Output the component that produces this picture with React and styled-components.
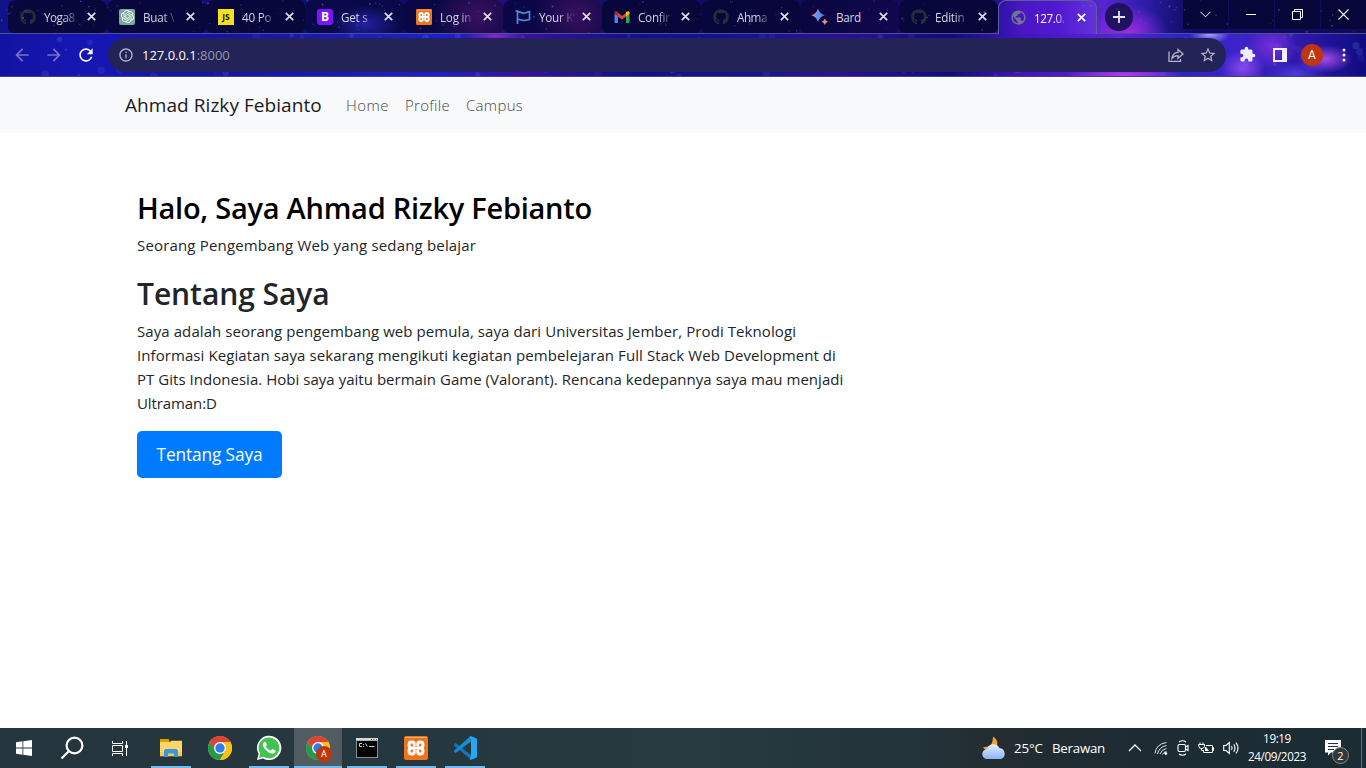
import React from "react";
import styled, { createGlobalStyle } from "styled-components";
import { FaGithub } from "react-icons/fa";
import { SiOpenai } from "react-icons/si";
import { MdExtension, MdPublic, MdRefresh, MdStarBorder, MdInfoOutline, MdArrowBack, MdArrowForward } from "react-icons/md";

const Global = createGlobalStyle`
  * { box-sizing: border-box; }
  html, body { margin: 0; padding: 0; }
  body { background: #fff; font-family: "Open Sans", "Noto Sans", sans-serif; overflow: hidden; }
  svg { display: block; flex: none; }
`;

const Screen = styled.div`
  width: 1366px;
  height: 768px;
  display: flex;
  flex-direction: column;
  overflow: hidden;
`;

/* ---------- browser chrome ---------- */
const TabStrip = styled.div`
  height: 34px;
  display: flex;
  align-items: stretch;
  padding-left: 8px;
  position: relative;
  border-bottom: 1px solid #4f4f96;
  background:
    radial-gradient(ellipse 40px 30px at 1128px 34px, #a02ce8 0%, transparent 100%),
    linear-gradient(90deg, #11118a 0, #0d0d6a 400px, #2a1080 540px, #0d0d62 640px, #150b62 960px, #4a14c0 1060px, #5626d0 1104px, #2c1ca8 1145px, #0f0d62 1190px, #120a55 1366px);
`;

const tabShades = {
  navy: "linear-gradient(90deg, #08083f, #07073a)",
  blue: "radial-gradient(ellipse 34px 18px at 60px 24px, #2222a0, transparent), #09094a",
  plum: "radial-gradient(ellipse 44px 40px at 75% 45%, #39105f, transparent), #0b0746",
  dark: "linear-gradient(90deg, #07073d, #080539)",
  violet: "linear-gradient(90deg, #0a063f, #10074d)",
};

const TabBox = styled.div`
  width: 99px;
  height: 33px;
  display: flex;
  align-items: center;
  padding-left: 12px;
  position: relative;
  border-radius: 8px 8px 6px 6px;
  background: ${(p) => tabShades[p.$shade]};
  &::after {
    content: "";
    position: absolute;
    right: -1px;
    top: 7px;
    width: 1px;
    height: 20px;
    background: #585897;
    display: ${(p) => (p.$last ? "none" : "block")};
  }
`;

const ActiveTab = styled(TabBox)`
  height: 34px;
  width: 99px;
  padding-left: 11px;
  border: 1px solid #5d5d99;
  border-bottom: 0;
  border-radius: 8px 8px 0 0;
  background: linear-gradient(90deg, #2e12a8, #4b16c6 25%, #5118d0 60%, #6432dc);
`;

const Favicon = styled.span`
  width: 16px;
  height: 16px;
  display: flex;
  align-items: center;
  justify-content: center;
  border-radius: ${(p) => p.$radius || 0}px;
  background: ${(p) => p.$bg || "none"};
  color: ${(p) => p.$color || "#fff"};
  font-weight: 700;
  font-size: ${(p) => p.$size || 9}px;
`;

const TabTitle = styled.span`
  width: 36px;
  margin-left: 8px;
  overflow: hidden;
  white-space: nowrap;
  font-size: 11.7px;
  line-height: 18px;
  letter-spacing: ${(p) => p.$ls || -0.25}px;
  color: ${(p) => (p.$active ? "#fff" : "#d3d3e2")};
  mask-image: ${(p) => (p.$full ? "none" : "linear-gradient(90deg, #000 20px, transparent 35px)")};
`;

const CloseSlot = styled.span`
  margin-left: 7px;
`;

const NewTab = styled.span`
  width: 28px;
  height: 28px;
  margin: 3px 0 0 8px;
  border-radius: 50%;
  background: #20125f;
  display: flex;
  align-items: center;
  justify-content: center;
`;

const WindowControls = styled.div`
  margin-left: auto;
  display: flex;
  gap: 1px;
  height: 29px;
`;

const WindowButton = styled.span`
  width: 45px;
  height: 29px;
  padding-right: 1px;
  display: flex;
  align-items: center;
  justify-content: center;
  background: #070638;
`;

const Sky = styled.svg`
  position: absolute;
  left: 0;
  top: 0;
  pointer-events: none;
`;

const Toolbar = styled.div`
  height: 43px;
  display: flex;
  align-items: center;
  padding: 0 0 1px 14px;
  position: relative;
  border-bottom: 1px solid #44427c;
  background:
    radial-gradient(ellipse 28px 14px at 1325px 25px, #a34bea, transparent),
    radial-gradient(ellipse 22px 18px at 1243px 34px, #8848ef, transparent),
    radial-gradient(ellipse 26px 24px at 1272px 12px, #7430d8, transparent),
    radial-gradient(ellipse 30px 12px at 1296px 40px, #4a3be0, transparent),
    radial-gradient(ellipse 60px 10px at 1125px 42px, #bb3df0, transparent),
    radial-gradient(ellipse 30px 10px at 495px 2px, #7c2bc8, transparent),
    radial-gradient(ellipse 20px 10px at 1210px 0, #a8a0ff, transparent),
    linear-gradient(90deg, #1313a2 0, #1616b4 90px, #1414a4 220px, #1d20c8 440px, #3a10a0 520px, #10108c 640px, #171292 760px, #2e1098 830px, #100c7c 950px, #4413bc 1020px, #5e22d8 1120px, #2a22c8 1180px, #3d23c8 1240px, #2a16a4 1310px, #0e0c80 1366px);
`;

const NavIcon = styled.span`
  width: 16px;
  height: 20px;
  margin-right: 16px;
  display: flex;
  align-items: center;
  justify-content: center;
  color: ${(p) => (p.$dim ? "#7672cd" : "#f5f5fb")};
`;

const Omnibox = styled.div`
  width: 1118px;
  height: 34px;
  margin-left: -2px;
  border-radius: 17px;
  background: #232357;
  display: flex;
  align-items: center;
  padding: 0 9px 0 10px;
  position: relative;
  z-index: 1;
  color: #b4b4c4;
`;

const Url = styled.span`
  margin-left: 8px;
  font-size: 13px;
  letter-spacing: -0.02px;
  color: #fff;
  em { font-style: normal; color: #9696ae; }
`;

const OmniboxActions = styled.span`
  margin-left: auto;
  display: flex;
  align-items: center;
  gap: 15px;
`;

const ToolbarActions = styled.div`
  display: flex;
  align-items: center;
  margin-left: 13px;
  position: relative;
  z-index: 1;
  color: #eef;
`;

const PanelIcon = styled.svg`
  margin-left: 17px;
`;

const Avatar = styled.span`
  width: 22px;
  height: 22px;
  margin: 0 12px 0 14px;
  border-radius: 50%;
  background: #bf360c;
  color: #fff;
  font: 12px/22px Roboto, sans-serif;
  text-align: center;
`;

/* ---------- web page ---------- */
const Navbar = styled.nav`
  height: 56px;
  background: #f8f9fa;
  display: flex;
  align-items: center;
  padding: 0 0 0 125px;
`;

const Brand = styled.span`
  width: 205px;
  white-space: nowrap;
  font-size: 19px;
  letter-spacing: 0.06px;
  color: #1a1a1a;
`;

const NavLinks = styled.div`
  display: flex;
  gap: 16px;
  margin-left: 16px;
`;

const NavLink = styled.span`
  width: ${(p) => p.$w}px;
  white-space: nowrap;
  font-size: 15px;
  font-weight: 300;
  letter-spacing: ${(p) => p.$ls || 0}px;
  color: #484848;
`;

const Main = styled.main`
  flex: 1;
  padding: 56px 0 0 137px;
  display: flex;
  flex-direction: column;
  align-items: flex-start;
  background: #fff;
`;

const Heading = styled.h1`
  margin: ${(p) => p.$margin};
  font-size: ${(p) => p.$size}px;
  font-weight: 600;
  line-height: 38px;
  letter-spacing: ${(p) => p.$ls}px;
  color: ${(p) => p.$color};
  white-space: nowrap;
`;

const Paragraph = styled.p`
  margin: 0;
  font-size: 15px;
  line-height: 24px;
  color: #212529;
`;

const Line = styled.span`
  display: block;
  white-space: nowrap;
  letter-spacing: ${(p) => p.$ls || 0}px;
`;

const PrimaryButton = styled.button`
  width: 145px;
  height: 47px;
  margin: 16px 0 0;
  padding: 0;
  border: 0;
  border-radius: 5px;
  background: #007bff;
  color: #fff;
  font: 17.3px/47px "Open Sans", sans-serif;
  letter-spacing: -0.12px;
`;

/* ---------- taskbar ---------- */
const Taskbar = styled.footer`
  height: 40px;
  display: flex;
  background: linear-gradient(90deg, #25353d 0, #26383f 450px, #273b40 700px, #22333a 920px, #232c31 1000px, #1d2c33 1130px, #1c2c34 1366px);
`;

const TaskButton = styled.span`
  width: 48px;
  height: 40px;
  margin-left: ${(p) => p.$gap || 0}px;
  display: flex;
  flex-direction: column;
  background: ${(p) => (p.$active ? "#505c62" : "none")};
  &::after {
    content: "";
    height: 2px;
    margin: 0 ${(p) => (p.$active ? 0 : 4)}px;
    background: ${(p) => (p.$open ? "#76b9ed" : "transparent")};
  }
`;

const TaskIcon = styled.span`
  height: 38px;
  padding: 2px 0 0 0;
  display: flex;
  align-items: center;
  justify-content: center;
  position: relative;
`;

const ProfileBadge = styled.span`
  position: absolute;
  left: 22px;
  top: 18px;
  width: 16px;
  height: 16px;
  border-radius: 50%;
  background: #bf360c;
  color: #fff;
  font: 9px/16px Roboto, sans-serif;
  text-align: center;
`;

const Tray = styled.div`
  margin-left: auto;
  width: 385px;
  display: flex;
  align-items: center;
  color: #fff;
`;

const Weather = styled.span`
  width: 143px;
  display: flex;
  align-items: center;
  font-size: 13.3px;
  white-space: nowrap;
  svg { margin: 0 -1px 0 1px; }
`;

const Temperature = styled.span`
  width: 38px;
  margin-left: 8px;
  letter-spacing: -0.1px;
`;

const Condition = styled.span`
  letter-spacing: -0.25px;
`;

const TrayIcons = styled.span`
  display: flex;
  align-items: center;
  gap: 8px;
`;

const Clock = styled.span`
  width: 72px;
  margin: -2px 0 0 0;
  display: flex;
  flex-direction: column;
  text-align: center;
  font-size: 11.7px;
  line-height: 18px;
  letter-spacing: -0.4px;
`;

const Notifications = styled.span`
  width: 26px;
  height: 28px;
  margin: 9px 0 0 12px;
  position: relative;
`;

const Count = styled.span`
  position: absolute;
  left: 7px;
  top: 8px;
  width: 17px;
  height: 17px;
  border: 1px solid #87898b;
  border-radius: 50%;
  background: #343638;
  font-size: 11px;
  line-height: 15px;
  text-align: center;
`;

const ShowDesktop = styled.span`
  width: 5px;
  height: 40px;
  margin-left: auto;
  border-left: 1px solid #64727a;
`;

/* ---------- drawings ---------- */
const Cross = ({ color = "#dedeea" }) => (
  <svg width="9" height="9" viewBox="0 0 9 9" stroke={color} strokeWidth="1.7">
    <path d="M.8 .8l7.4 7.4M8.2 .8L.8 8.2" />
  </svg>
);

const Stars = ({ height, seed, count, large }) => {
  const dots = [];
  let s = seed;
  const next = () => {
    s = (s * 16807) % 2147483647;
    return s / 2147483647;
  };
  for (let i = 0; i < count; i++) {
    dots.push(
      <circle key={i} cx={next() * 1366} cy={next() * height} r={(large ? 1.5 : 0.4) + next() * (large ? 2.5 : 0.6)}
        fill={next() > 0.5 ? "#6f86f0" : "#8e62dc"} opacity={(large ? 0.08 : 0.2) + next() * (large ? 0.16 : 0.35)} />
    );
  }
  return dots;
};

const Flag = () => (
  <svg width="16" height="16" viewBox="0 0 16 16" fill="none" stroke="#4d8ee0" strokeWidth="1.7">
    <path d="M.5 2h3M2.500 1.500V15M2.500 3c3-1 4 1.300 6.300 1.300S12 3 14.500 2.700V10.500c-2.500.400-3.300 1-5.500 1S6 9.800 2.500 10.700" />
  </svg>
);

const Gmail = () => (
  <svg width="16" height="16" viewBox="0 0 16 16">
    <path fill="#4285f4" d="M1 14h3V7L.500 4.500V13q0 1 .5 1z" />
    <path fill="#34a853" d="M12 14h2.500q1 0 1-1V4.500L12 7z" />
    <path fill="#ea4335" d="M3.500 3.500L8 6.900l4.500-3.400V7.200L8 10.600 3.500 7.200z" />
    <path fill="#c5221f" d="M.500 4c0-2 1.700-2.300 3.500-.9v4.300L.500 5z" />
    <path fill="#fbbc04" d="M15.500 4c0-2-1.700-2.300-3.500-.9v4.300L15.500 5z" />
  </svg>
);

const Bard = () => (
  <svg width="18" height="18" viewBox="0 0 18 18">
    <defs>
      <linearGradient id="bard"><stop offset="0" stopColor="#f0837c" /><stop offset=".35" stopColor="#9b83d8" /><stop offset=".6" stopColor="#3f9ce8" /><stop offset="1" stopColor="#3c7de0" /></linearGradient>
    </defs>
    <path fill="url(#bard)" d="M7 .500Q8.500 5.500 13.700 7.200 8.500 9 7 14 5.500 9 .300 7.200 5.500 5.500 7 .500z" />
    <path fill="#e88989" d="M13.800 10.500q.8 2.400 3.200 3.200-2.400.8-3.200 3.200-.8-2.400-3.200-3.200 2.400-.8 3.200-3.200z" />
  </svg>
);

const Chrome = () => (
  <svg width="24" height="24" viewBox="0 0 24 24">
    <circle cx="12" cy="12" r="12" fill="#fbc116" />
    <path fill="#dd4335" d="M1.600 6A12 12 0 0 1 22.400 6H12L6.800 15z" />
    <path fill="#229b4a" d="M1.600 6A12 12 0 0 0 12 24L17.200 15 12 12H5.500z" />
    <path fill="#fbc116" d="M22.400 6A12 12 0 0 1 12 24L17.200 15V6z" />
    <circle cx="12" cy="12" r="6" fill="#fff" />
    <circle cx="12" cy="12" r="4.700" fill="#2f7de9" />
  </svg>
);

const WindowsLogo = () => (
  <svg width="16" height="16" viewBox="0 0 16 16" fill="#fff">
    <path d="M0 2.200L6.500 1.300v6.200H0zM7.300 1.200L16 0v7.500H7.300zM0 8.400h6.500v6.300L0 13.800zM7.300 8.400H16V16l-8.700-1.200z" />
  </svg>
);

const SearchGlass = () => (
  <svg width="24" height="24" viewBox="0 0 24 24" fill="none" stroke="#fff" strokeWidth="2.200">
    <circle cx="14.500" cy="9.500" r="7.900" />
    <path d="M8.800 15.200L1.500 22.500" />
  </svg>
);

const TaskView = () => (
  <svg width="16" height="17" viewBox="0 0 16 17" fill="none" stroke="#fff" strokeWidth="1">
    <path d="M.5 1v2.500h10V1M.5 16v-2.500h10V16M.5 5.500h10v6h-10zM14.500 1v15" />
    <path fill="#fff" stroke="none" d="M13 5h3v3h-3z" />
  </svg>
);

const Explorer = () => (
  <svg width="22" height="18" viewBox="0 0 22 18">
    <path fill="#e0a100" d="M0 0h8.500l1 1.500V5H0z" />
    <path fill="#ffd766" d="M0 3h10l1.500-1.300H22V17H0z" />
    <path fill="#f6c94f" d="M0 13h22v4.300H0z" />
    <path fill="#3c96dc" d="M4 18v-6.500L5.500 10h11l1.500 1.500V18h-4v-3.500H8V18z" />
  </svg>
);

const Whatsapp = () => (
  <svg width="26" height="26" viewBox="0 0 26 26">
    <path fill="#fff" d="M1 25l1.600-6A12.200 12.200 0 1 1 7 23.400z" />
    <path fill="#40c351" d="M3 23l1.200-4.400A10.400 10.400 0 1 1 7.500 21.800z" />
    <path fill="#fff" d="M9.800 7.300c-.3-.7-1.500-.8-2.200.1-1.500 1.700-.8 4 1.500 6.800 2.600 3 5.300 4.600 8 4.300 1.600-.3 2.600-1.500 2.400-3l-3-1.500c-.7-.2-1.300 1.600-1.900 1.500-2.200-.7-3.700-2.200-4.600-4.100-.1-.6 1-1.200 1-1.800z" />
  </svg>
);

const Terminal = () => (
  <svg width="22" height="20" viewBox="0 0 22 20">
    <rect width="22" height="20" fill="#8a8d90" />
    <rect x="1" y="3" width="20" height="16" fill="#050505" />
    <path fill="#d5d9dc" d="M0 0h22v2.500H0z" />
    <path stroke="#56616c" d="M15 1.500h1M17.500 1.500h1M20 1.500h1" />
    <path d="M6 5.500H3.500v3H6M7.500 6v1M7.500 8v1M9.500 5.500l1.800 3M13 8.500h5.500" stroke="#ccc" fill="none" />
  </svg>
);

const Xampp = ({ size }) => (
  <svg width={size} height={size} viewBox="0 0 24 24">
    <rect width="24" height="24" rx="2" fill="#f1741d" />
    <path fill="none" stroke="#f9b27d" d="M1 1.500h22" />
    <path fill="none" stroke="#fff" strokeWidth="2.900" strokeLinecap="round" strokeLinejoin="round"
      d="M10.300 9V8.500Q10.300 6 8.500 6H7.500Q5 6 5 9t3 3h8q3 0 3-3t-2.500-3h-1Q13.700 6 13.700 8.500V9M8 12q-3 0-3 3t2.500 3h1q1.800 0 1.800-2.500V15M16 12q3 0 3 3t-2.500 3h-1q-1.800 0-1.800-2.500V15" />
  </svg>
);

const VsCode = () => (
  <svg width="24" height="24" viewBox="0 0 24 24">
    <path fill="#1176bb" d="M1 8.500l1.700-1.400L18 19v4.500L1 9.600z" />
    <path fill="#168bd6" d="M1 14.800L17.500 0 18 5.500 2.700 17 1 15.800z" />
    <path fill="#2ba6ee" d="M17.500 0L24 2.800v18.400L17.500 24l-.8-.7L18 20V4L16.700.8z" />
  </svg>
);

const MoonCloud = () => (
  <svg width="25" height="24" viewBox="0 0 25 24">
    <defs><linearGradient id="cloud" x2="0" y2="1"><stop stopColor="#e3eeff" /><stop offset="1" stopColor="#8db5f5" /></linearGradient></defs>
    <path fill="#f2a42c" d="M11 .500q4.500 2.500 4.300 7.500-.5 5-6 6.500Q3 15 1 11q7 .5 9-4 .9-3 1-6.500z" />
    <path fill="url(#cloud)" d="M5.500 23a5 5 0 0 1-.5-10 6.700 6.700 0 0 1 12.500-1 5.700 5.700 0 0 1 1.500 11z" />
  </svg>
);

const Share = () => (
  <svg width="16" height="16" viewBox="0 0 16 16" fill="none" stroke="currentColor" strokeWidth="1.300">
    <path d="M1 4.500V14.300h11.500V12M4 11.500C4.300 7.500 6.500 5.500 10 5.300V2.500L15 7l-5 4.300V8.600C7.500 8.600 5.500 9.300 4 11.500z" />
  </svg>
);

const tabs = [
  { title: "Yoga8", shade: "navy", tight: true, icon: <Favicon $color="#292d38"><FaGithub size={16} /></Favicon> },
  { title: "Buat \\", shade: "navy", icon: <Favicon $bg="#74aa9c" $radius={2}><SiOpenai size={13} /></Favicon> },
  { title: "40 Po", shade: "navy", icon: <Favicon $bg="#f7df1e" $color="#171700" $size={8.5}>JS</Favicon> },
  { title: "Get s", shade: "blue", icon: <Favicon $bg="#7916f5" $radius={3} $size={12}>B</Favicon> },
  { title: "Log in", shade: "plum", icon: <Xampp size={16} /> },
  { title: "Your K", shade: "plum", icon: <Favicon><Flag /></Favicon> },
  { title: "Confir", shade: "dark", icon: <Favicon><Gmail /></Favicon> },
  { title: "Ahma", shade: "dark", tight: true, icon: <Favicon $color="#292d38"><FaGithub size={16} /></Favicon> },
  { title: "Bard", shade: "violet", full: true, icon: <Favicon><Bard /></Favicon> },
  { title: "Editin", shade: "dark", icon: <Favicon $color="#292d38"><FaGithub size={16} /></Favicon> },
];

export default function App() {
  return (
    <Screen>
      <Global />
      <TabStrip>
        {tabs.map((t, i) => (
          <TabBox key={i} $shade={t.shade} $last={i === tabs.length - 1}>
            {t.icon}
            <TabTitle $full={t.full} $ls={t.tight ? -0.5 : -0.25}>{t.title}</TabTitle>
            <CloseSlot><Cross /></CloseSlot>
          </TabBox>
        ))}
        <ActiveTab $last>
          <Favicon $color="#73768a"><MdPublic size={17} /></Favicon>
          <TabTitle $active $ls={-0.4}>127.0.</TabTitle>
          <CloseSlot><Cross color="#fff" /></CloseSlot>
        </ActiveTab>
        <NewTab>
          <svg width="12" height="12" viewBox="0 0 12 12" stroke="#e4e4ee" strokeWidth="1.800"><path d="M6 0v12M0 6h12" /></svg>
        </NewTab>
        <WindowControls>
          <WindowButton><svg width="11" height="7" viewBox="0 0 11 7" fill="none" stroke="#fff"><path d="M.5 .8l5 5 5-5" /></svg></WindowButton>
          <WindowButton><svg width="10" height="1" viewBox="0 0 10 1"><path fill="#fff" d="M0 0h10v1H0z" /></svg></WindowButton>
          <WindowButton><svg width="11" height="11" viewBox="0 0 11 11" fill="none" stroke="#fff"><path d="M.5 2.500h8v8h-8zM2.500 2.500v-2h8v8h-2" /></svg></WindowButton>
          <WindowButton><svg width="11" height="11" viewBox="0 0 11 11" stroke="#fff" strokeWidth="1.100"><path d="M.5 .5l10 10M10.500 .5l-10 10" /></svg></WindowButton>
        </WindowControls>
        <Sky width="1366" height="33"><Stars height={33} seed={771} count={170} /></Sky>
      </TabStrip>
      <Toolbar>
        <Sky width="1366" height="42"><Stars height={42} seed={4219} count={130} large /></Sky>
        <NavIcon $dim><MdArrowBack size={20} /></NavIcon>
        <NavIcon $dim><MdArrowForward size={20} /></NavIcon>
        <NavIcon><MdRefresh size={20} /></NavIcon>
        <Omnibox>
          <MdInfoOutline size={16} />
          <Url>127.0.0.1<em>:8000</em></Url>
          <OmniboxActions><Share /><MdStarBorder size={18} /></OmniboxActions>
        </Omnibox>
        <ToolbarActions>
          <MdExtension size={17} />
          <PanelIcon width="14" height="14" viewBox="0 0 14 14"><path fill="#f0f0f8" fillRule="evenodd" d="M0 0h14v14H0zM2 2v10h7V2z" /></PanelIcon>
          <Avatar>A</Avatar>
          <svg width="18" height="14" viewBox="0 0 18 14" fill="#f0f0f8"><circle cx="9" cy="2" r="1.500" /><circle cx="9" cy="7" r="1.500" /><circle cx="9" cy="12" r="1.500" /></svg>
        </ToolbarActions>
      </Toolbar>

      <Navbar>
        <Brand>Ahmad Rizky Febianto</Brand>
        <NavLinks>
          <NavLink $w={43} $ls={0.45}>Home</NavLink>
          <NavLink $w={45} $ls={0.3}>Profile</NavLink>
          <NavLink $w={58} $ls={0.3}>Campus</NavLink>
        </NavLinks>
      </Navbar>
      <Main>
        <Heading $size={29} $ls={-0.26} $color="#000" $margin="0 0 6px">Halo, Saya Ahmad Rizky Febianto</Heading>
        <Paragraph><Line $ls={0.17}>Seorang Pengembang Web yang sedang belajar</Line></Paragraph>
        <Heading as="h2" $size={30} $ls={-0.06} $color="#212529" $margin="18px 0 6px">Tentang Saya</Heading>
        <Paragraph>
          <Line $ls={0.08}>Saya adalah seorang pengembang web pemula, saya dari Universitas Jember, Prodi Teknologi</Line>
          <Line $ls={0.08}>Informasi Kegiatan saya sekarang mengikuti kegiatan pembelejaran Full Stack Web Development di</Line>
          <Line $ls={0.03}>PT Gits Indonesia. Hobi saya yaitu bermain Game (Valorant). Rencana kedepannya saya mau menjadi</Line>
          <Line $ls={-0.1}>Ultraman:D</Line>
        </Paragraph>
        <PrimaryButton>Tentang Saya</PrimaryButton>
      </Main>

      <Taskbar>
        <TaskButton><TaskIcon><WindowsLogo /></TaskIcon></TaskButton>
        <TaskButton><TaskIcon><SearchGlass /></TaskIcon></TaskButton>
        <TaskButton><TaskIcon><TaskView /></TaskIcon></TaskButton>
        <TaskButton $gap={3} $open><TaskIcon><Explorer /></TaskIcon></TaskButton>
        <TaskButton $gap={1}><TaskIcon><Chrome /></TaskIcon></TaskButton>
        <TaskButton $gap={1} $open><TaskIcon><Whatsapp /></TaskIcon></TaskButton>
        <TaskButton $gap={1} $open $active><TaskIcon><Chrome /><ProfileBadge>A</ProfileBadge></TaskIcon></TaskButton>
        <TaskButton $gap={1} $open><TaskIcon><Terminal /></TaskIcon></TaskButton>
        <TaskButton $gap={1} $open><TaskIcon><Xampp size={24} /></TaskIcon></TaskButton>
        <TaskButton $gap={1} $open><TaskIcon><VsCode /></TaskIcon></TaskButton>
        <Tray>
          <Weather>
            <MoonCloud />
            <Temperature>25°C</Temperature>
            <Condition>Berawan</Condition>
          </Weather>
          <TrayIcons>
            <svg width="22" height="14" viewBox="0 0 22 14" fill="none" stroke="#fff" strokeWidth="1.300"><path d="M5 10l6-6 6 6" /></svg>
            <svg width="14" height="14" viewBox="0 0 14 14" fill="none" stroke="#fff"><path d="M1 12.500Q2 3 12.500 1.500M3.500 13Q5 6 12.500 4.500M6 13Q7.500 8.500 12.500 7.500M8.500 13.500Q9.500 11 12.500 10.500" opacity=".85" /><circle cx="11.800" cy="12.500" r="1" fill="#fff" /></svg>
            <svg width="14" height="16" viewBox="0 0 14 16" fill="none" stroke="#fff" strokeWidth="1.100"><rect x="2" y="4.500" width="7.500" height="7" rx="1.500" /><path d="M9.500 7l2.500-1.500v5L9.500 9M3 2Q6.500-.5 10 2M3 14Q6.500 16.500 10 14" /></svg>
            <svg width="17" height="14" viewBox="0 0 17 14" fill="none" stroke="#fff"><path d="M8 4.500h6.500v7h-9V9M14.500 6.500h1v3h-1M.5 3.500h6v2Q6 7.500 3.500 7.500 1 7.500 1 5.500zM2 3.500V1.500M5 3.500V1.500M3.500 7.500v2h2" /><path fill="#fff" stroke="none" d="M7 6h1l3 4H7z" /></svg>
            <svg width="18" height="14" viewBox="0 0 18 14" fill="none" stroke="#fff" strokeWidth="1.100"><path d="M.7 4.500h2.300L6.300 1.500v11L3 9.500H.7zM8.500 5q1.300 2 0 4M10.800 3.300q2.400 3.700 0 7.400M13 1.600q4 5.400 0 10.800" /></svg>
          </TrayIcons>
          <Clock><span>19:19</span><span>24/09/2023</span></Clock>
          <Notifications>
            <svg width="17" height="18" viewBox="0 0 17 18"><path fill="#fff" d="M0 1h16v12.500H6L3 16.500v-3H0z" /><path stroke="#26343b" d="M3 4.500h10M3 7.500h10M3 10.500h6" /></svg>
            <Count>2</Count>
          </Notifications>
          <ShowDesktop />
        </Tray>
      </Taskbar>
    </Screen>
  );
}
